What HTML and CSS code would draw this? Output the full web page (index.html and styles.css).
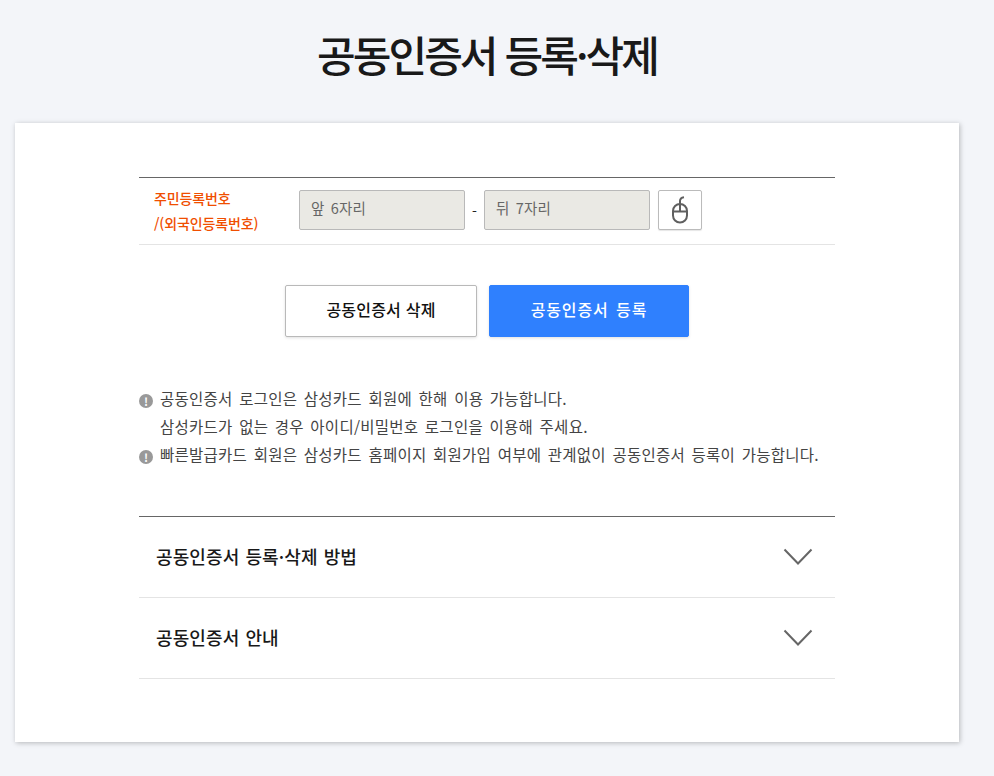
FILE: index.html
```html
<!DOCTYPE html>
<html lang="ko">
<head>
<meta charset="utf-8">
<title>공동인증서 등록·삭제</title>
<link rel="stylesheet" href="styles.css">
</head>
<body>
<h1 class="title">공동인증서 등록·삭제</h1>
<main class="card">
  <div class="form-row">
    <div class="label">주민등록번호<br>/(외국인등록번호)</div>
    <div class="field">앞 6자리</div>
    <span class="dash">-</span>
    <div class="field">뒤 7자리</div>
    <button class="mouse-btn" type="button" aria-label="마우스 입력">
      <svg width="18" height="28" viewBox="0 0 18 28" fill="none" stroke="#5f5f5f" stroke-width="2">
        <rect x="2" y="8" width="14" height="18.5" rx="7"/>
        <path d="M2 15.5H16M9 8V15.5M9 8V5C9 2.5 10.5 1.5 13 1.2"/>
      </svg>
    </button>
  </div>
  <div class="actions">
    <button class="btn btn-white" type="button">공동인증서 삭제</button>
    <button class="btn btn-blue" type="button">공동인증서 등록</button>
  </div>
  <ul class="notes">
    <li class="note"><span class="bang">!</span>공동인증서 로그인은 삼성카드 회원에 한해 이용 가능합니다.<br>삼성카드가 없는 경우 아이디/비밀번호 로그인을 이용해 주세요.</li>
    <li class="note"><span class="bang">!</span>빠른발급카드 회원은 삼성카드 홈페이지 회원가입 여부에 관계없이 공동인증서 등록이 가능합니다.</li>
  </ul>
  <section class="accordion">
    <div class="acc-row"><span>공동인증서 등록·삭제 방법</span><svg class="chev" width="30" height="18" viewBox="0 0 30 18" fill="none" stroke="#666" stroke-width="2"><path d="M1.5 1.5L15 15.5L28.5 1.5"/></svg></div>
    <div class="acc-row"><span>공동인증서 안내</span><svg class="chev" width="30" height="18" viewBox="0 0 30 18" fill="none" stroke="#666" stroke-width="2"><path d="M1.5 1.5L15 15.5L28.5 1.5"/></svg></div>
  </section>
</main>
</body>
</html>
```
FILE: styles.css
```css
* { box-sizing: border-box; }
html, body { margin: 0; padding: 0; }
body {
  height: 776px;
  overflow: hidden;
  background: #f3f5f9;
  color: #222;
  font-family: "Noto Sans CJK KR", "Noto Sans", sans-serif;
}
.title {
  margin: 0;
  height: 123px;
  padding: 24px 20px 0 0;
  text-align: center;
  font-size: 42px;
  line-height: 60px;
  font-weight: 500;
  letter-spacing: -2.9px;
  color: #191919;
}
.card {
  margin-left: 15px;
  width: 944px;
  height: 619px;
  padding: 54px 124px 0;
  background: #fff;
  box-shadow: 1px 1px 5px rgba(0, 0, 0, 0.25);
}
.form-row {
  display: flex;
  align-items: center;
  height: 68px;
  padding-bottom: 2px;
  border-top: 1px solid #666;
  border-bottom: 1px solid #e4e4e4;
}
.label {
  width: 160px;
  padding: 2px 0 0 15px;
  color: #f04e00;
  font-size: 14px;
  font-weight: 500;
  line-height: 25px;
  letter-spacing: -0.12px;
}
.field {
  width: 166px;
  height: 40px;
  padding-left: 11px;
  background: #eae9e4;
  border: 1px solid #b9b9b9;
  border-radius: 2px;
  color: #666;
  font-size: 14.5px;
  line-height: 34px;
  word-spacing: 2px;
  letter-spacing: 0.2px;
}
.dash {
  width: 19px;
  padding-top: 2px;
  text-align: center;
  font-size: 14px;
  line-height: 40px;
}
.mouse-btn {
  display: flex;
  align-items: center;
  justify-content: center;
  width: 44px;
  height: 40px;
  margin-left: 8px;
  padding: 0;
  background: #fff;
  border: 1px solid #bbb;
  border-radius: 2px;
  box-shadow: 0 1px 1px rgba(0, 0, 0, 0.1);
}
.actions {
  display: flex;
  justify-content: center;
  gap: 12px;
  margin-top: 40px;
}
.btn {
  height: 52px;
  padding: 0 0 4px;
  border-radius: 2px;
  font-family: inherit;
  font-size: 16px;
  font-weight: 500;
  box-shadow: 0 1px 3px rgba(0, 0, 0, 0.12);
}
.btn-white { width: 192px; background: #fff; border: 1px solid #b9b9b9; color: #111; letter-spacing: 0.2px; }
.btn-blue { width: 200px; background: #2f80fe; border: 1px solid #2f80fe; color: #fff; letter-spacing: 0.9px; word-spacing: 2px; }
.notes {
  list-style: none;
  margin: 47px 0 0;
  padding: 0;
  color: #444;
  font-size: 15.5px;
  line-height: 28px;
  letter-spacing: 0.25px;
  word-spacing: 2px;
}
.note {
  position: relative;
  padding-left: 21px;
}
.bang {
  position: absolute;
  left: 0;
  top: 10px;
  width: 14px;
  height: 14px;
  border-radius: 50%;
  background: #999;
  color: #fff;
  font-size: 11px;
  font-weight: 700;
  line-height: 14px;
  text-align: center;
  letter-spacing: 0;
}
.accordion {
  margin-top: 48px;
  border-top: 1px solid #666;
}
.acc-row {
  display: flex;
  align-items: center;
  justify-content: space-between;
  height: 81px;
  padding: 0 22px 0 17px;
  border-bottom: 1px solid #e4e4e4;
  color: #191919;
  font-size: 18px;
  font-weight: 500;
  letter-spacing: 0.1px;
  word-spacing: 1px;
}
.acc-row span { padding-bottom: 3px; }
```
